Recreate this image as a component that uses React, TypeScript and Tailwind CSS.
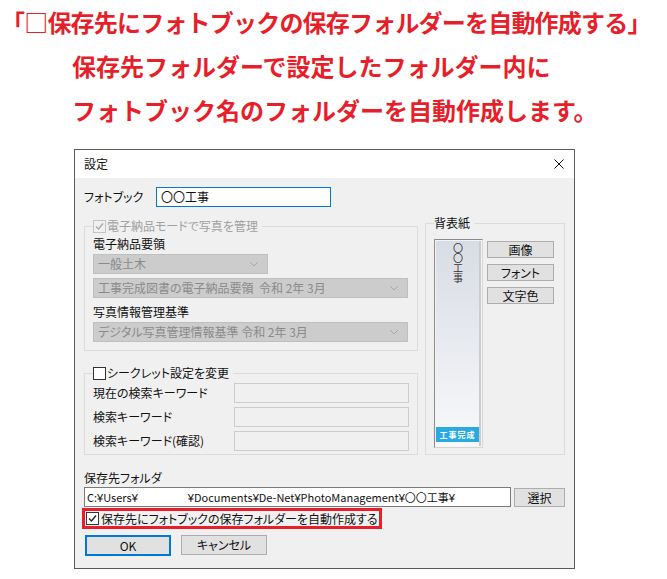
import React from "react";

const Chevron = () => (
  <svg width="10" height="6" viewBox="0 0 10 6" className="shrink-0">
    <polyline points="1,1 5,5 9,1" fill="none" stroke="#a8a8a8" strokeWidth="1" />
  </svg>
);

const Check = ({ color }: { color: string }) => (
  <svg width="11" height="11" viewBox="0 0 11 11">
    <polyline points="2,5.5 4.5,8 9,2.5" fill="none" stroke={color} strokeWidth="1.4" />
  </svg>
);

// half-width yen sign, as Windows draws the path separator
const Yen = () => <span className="font-['Liberation_Sans',sans-serif]">¥</span>;

function DisabledSelect({ value, width }: { value: string; width: string }) {
  return (
    <div
      className={`flex h-[20px] items-center justify-between border border-[#bfbfbf] bg-[#cccccc] pl-[4px] pr-[8px] text-[#8a8a8a] ${width}`}
    >
      <span className="whitespace-pre">{value}</span>
      <Chevron />
    </div>
  );
}

function WinButton({ label, className }: { label: string; className: string }) {
  return (
    <div
      className={`flex items-center justify-center border border-[#adadad] bg-[#e1e1e1] text-[#111] ${className}`}
    >
      {label}
    </div>
  );
}

export default function App() {
  const keywordRows = ["現在の検索キーワード", "検索キーワード", "検索キーワード(確認)"];

  return (
    <div className="h-[579px] w-[667px] overflow-hidden bg-white font-['Noto_Sans_CJK_JP',sans-serif]">
      {/* heading */}
      <div className="text-[24px] font-bold text-[#e61f2b]">
        <div className="h-[44px] whitespace-nowrap pl-[1px] leading-[44px] tracking-[-0.8px]">
          「□保存先にフォトブックの保存フォルダーを自動作成する」
        </div>
        <div className="h-[44px] whitespace-nowrap pl-[72px] leading-[44px]">
          保存先フォルダーで設定したフォルダー内に
        </div>
        <div className="h-[44px] whitespace-nowrap pl-[72px] leading-[44px]">
          フォトブック名のフォルダーを自動作成します。
        </div>
      </div>

      {/* dialog */}
      <div className="ml-[74px] mt-[17px] h-[420px] w-[501px] border border-[#5a5a5a] bg-[#f0f0f0] text-[12px] leading-[16px] text-[#111] [font-feature-settings:'palt']">
        <div className="flex h-[28px] items-center justify-between bg-white pl-[9px] pr-[10px]">
          <span>設定</span>
          <svg width="10" height="10" viewBox="0 0 10 10">
            <line x1="0.5" y1="0.5" x2="9.5" y2="9.5" stroke="#111" strokeWidth="1" />
            <line x1="9.5" y1="0.5" x2="0.5" y2="9.5" stroke="#111" strokeWidth="1" />
          </svg>
        </div>

        <div className="px-[9px] pt-[9px]">
          {/* photobook name */}
          <div className="flex h-[20px] items-center">
            <span className="w-[72px]">フォトブック</span>
            <div className="flex h-[20px] w-[175px] items-center border border-[#0078d7] bg-white pl-[4px]">
              〇〇工事
            </div>
          </div>

          <div className="mt-[8px] flex items-start">
            {/* left column */}
            <div className="w-[334px] pt-[3px]">
              <fieldset className="border border-[#dcdcdc] pb-[8px] pl-[8px]">
                <legend className="flex h-[16px] items-center pr-[4px] text-[#a0a0a0]">
                  <span className="mr-[1px] flex h-[13px] w-[13px] items-center justify-center border border-[#c4c4c4] bg-[#f0f0f0]">
                    <Check color="#a8a8a8" />
                  </span>
                  電子納品モードで写真を管理
                </legend>
                <div className="mt-[2px] h-[16px]">電子納品要領</div>
                <div className="mt-[2px]">
                  <DisabledSelect value="一般土木" width="w-[175px]" />
                </div>
                <div className="mt-[4px]">
                  <DisabledSelect value="工事完成図書の電子納品要領  令和 2年 3月" width="w-[315px]" />
                </div>
                <div className="mt-[6px] h-[16px]">写真情報管理基準</div>
                <div className="mt-[2px]">
                  <DisabledSelect value="デジタル写真管理情報基準 令和 2年 3月" width="w-[315px]" />
                </div>
              </fieldset>

              <fieldset className="mt-[14px] border border-[#dcdcdc] pb-[3px] pl-[8px]">
                <legend className="flex h-[16px] items-center pr-[4px]">
                  <span className="mr-[1px] h-[13px] w-[13px] border border-[#333] bg-white" />
                  シークレット設定を変更
                </legend>
                <div className="mt-[2px] flex flex-col gap-[4px]">
                  {keywordRows.map((label) => (
                    <div key={label} className="flex h-[20px] items-center">
                      <span className="w-[141px]">{label}</span>
                      <div className="h-[20px] w-[175px] border border-[#cccccc] bg-[#f0f0f0]" />
                    </div>
                  ))}
                </div>
              </fieldset>
            </div>

            {/* right column: spine */}
            <fieldset className="ml-[7px] w-[140px] border border-[#dcdcdc] pb-[6px] pl-[8px]">
              <legend className="h-[16px] pr-[4px]">背表紙</legend>
              <div className="mt-[8px] flex items-start">
                <div className="h-[209px] w-[49px] border border-[#8c8c8c] border-b-[#d8d8d8] border-r-[#d8d8d8] bg-[#f4f4f4] p-[1px]">
                  <div className="flex h-full flex-col border-r-2 border-r-[#c9ccd2] bg-gradient-to-b from-[#d8dce4] to-[#f8f9fb]">
                    <div className="flex flex-1 justify-center pt-[2px]">
                      <span className="text-[10px] leading-[10px] text-[#333] [writing-mode:vertical-rl]">
                        〇〇工事
                      </span>
                    </div>
                    <div className="mb-[4px] flex h-[15px] items-center justify-center bg-[#29abe2] text-[8px] font-bold leading-[8px] tracking-[1px] text-white">
                      工事完成
                    </div>
                  </div>
                </div>
                <div className="ml-[4px] mt-[2px] flex flex-col gap-[6px]">
                  <WinButton label="画像" className="h-[17px] w-[67px]" />
                  <WinButton label="フォント" className="h-[17px] w-[67px]" />
                  <WinButton label="文字色" className="h-[17px] w-[67px]" />
                </div>
              </div>
            </fieldset>
          </div>

          {/* save folder */}
          <div className="mt-[15px] h-[16px]">保存先フォルダ</div>
          <div className="mt-[1px] flex items-start">
            <div className="flex h-[20px] w-[427px] items-center whitespace-pre border border-[#7a7a7a] bg-white pl-[2px] text-[11px]">
              <span>
                C:<Yen />Users<Yen />
              </span>
              <span className="inline-block w-[50px]" />
              <span>
                <Yen />Documents<Yen />De-Net<Yen />PhotoManagement<Yen />〇〇工事<Yen />
              </span>
            </div>
            <WinButton label="選択" className="ml-[3px] mt-[1px] h-[19px] w-[51px]" />
          </div>

          <div className="-ml-[2px] mt-[1px] flex h-[21px] w-[300px] items-center border-[3px] border-[#e61f2b] pl-[1px]">
            <span className="mr-[2px] flex h-[13px] w-[13px] items-center justify-center border border-[#333] bg-white">
              <Check color="#222" />
            </span>
            保存先にフォトブックの保存フォルダーを自動作成する
          </div>

          <div className="mt-[6px] flex items-start pl-[1px]">
            <div className="flex h-[21px] w-[86px] items-center justify-center border-2 border-[#0078d7] bg-[#e1e1e1]">
              OK
            </div>
            <WinButton label="キャンセル" className="ml-[10px] h-[20px] w-[86px]" />
          </div>
        </div>
      </div>
    </div>
  );
}
